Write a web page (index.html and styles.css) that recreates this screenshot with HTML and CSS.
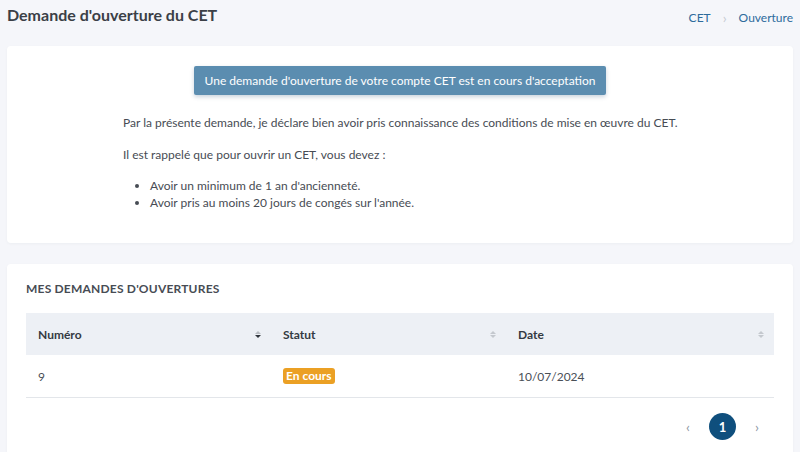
FILE: index.html
```html
<!DOCTYPE html>
<html lang="fr">
<head>
<meta charset="utf-8">
<title>Demande d'ouverture du CET</title>
<link rel="stylesheet" href="styles.css">
</head>
<body>
<div class="page">
  <header class="page-head">
    <h1 class="page-title">Demande d'ouverture du CET</h1>
    <nav class="crumbs">
      <a class="crumb">CET</a>
      <span class="crumb-sep">›</span>
      <a class="crumb">Ouverture</a>
    </nav>
  </header>

  <section class="card info-card">
    <div class="notice">Une demande d'ouverture de votre compte CET est en cours d'acceptation</div>
    <div class="info-text">
      <p>Par la présente demande, je déclare bien avoir pris connaissance des conditions de mise en œuvre du CET.</p>
      <p>Il est rappelé que pour ouvrir un CET, vous devez :</p>
      <ul>
        <li>Avoir un minimum de 1 an d'ancienneté.</li>
        <li>Avoir pris au moins 20 jours de congés sur l'année.</li>
      </ul>
    </div>
  </section>

  <section class="card list-card">
    <h2 class="card-title">MES DEMANDES D'OUVERTURES</h2>
    <div class="table">
      <div class="thead">
        <div class="th">Numéro<span class="sort active"><i class="up"></i><i class="down"></i></span></div>
        <div class="th">Statut<span class="sort"><i class="up"></i><i class="down"></i></span></div>
        <div class="th">Date<span class="sort"><i class="up"></i><i class="down"></i></span></div>
      </div>
      <div class="tr">
        <div class="td">9</div>
        <div class="td"><span class="badge">En cours</span></div>
        <div class="td">10/07/2024</div>
      </div>
    </div>
    <div class="pager">
      <span class="pg-arrow">‹</span>
      <span class="pg-num">1</span>
      <span class="pg-arrow">›</span>
    </div>
  </section>
</div>
</body>
</html>
```

FILE: styles.css
```css
* { box-sizing: border-box; }
html, body { margin: 0; padding: 0; }
body {
  background: #f5f6fa;
  font-family: "Lato", "Noto Sans", sans-serif;
  color: #4a4f57;
  font-size: 12px;
  overflow: hidden;
}
.page {
  padding: 0 7px;
  width: 800px;
}
.page-head {
  height: 46px;
  display: flex;
  justify-content: space-between;
  align-items: flex-start;
  padding-top: 5px;
}
.page-title {
  margin: 0;
  font-size: 16px;
  font-weight: 700;
  color: #3b3f47;
  line-height: 20px;
}
.crumbs {
  display: flex;
  align-items: center;
  gap: 12px;
  padding-top: 4px;
  font-size: 12px;
  color: #2d6b9c;
}
.crumb { color: #2d6b9c; }
.crumb-sep { color: #c6cbd2; font-size: 14px; }

.card {
  background: #fff;
  border-radius: 4px;
  box-shadow: 0 1px 3px rgba(30, 40, 60, 0.04);
}
.info-card {
  height: 197px;
  padding-top: 20px;
  display: flex;
  flex-direction: column;
  align-items: center;
}
.notice {
  width: 412px;
  height: 29px;
  line-height: 29px;
  text-align: center;
  background: #5b8db0;
  color: #fff;
  border-radius: 2px;
  box-shadow: 0 2px 4px rgba(40, 80, 120, 0.25);
  font-size: 12px;
  white-space: nowrap;
}
.info-text {
  align-self: flex-start;
  margin-left: 116px;
  margin-top: 19px;
  color: #474c54;
  font-size: 12px;
}
.info-text p {
  margin: 0 0 15px 0;
  line-height: 17px;
}
.info-text p + p { margin-bottom: 14px; }
.info-text ul {
  margin: 0;
  padding-left: 27px;
}
.info-text li { line-height: 17px; }

.list-card {
  margin-top: 21px;
  padding: 17px 19px 0 19px;
  height: 200px;
}
.card-title {
  margin: 0 0 16px 0;
  font-size: 12px;
  font-weight: 700;
  letter-spacing: 0.2px;
  color: #474c54;
  line-height: 16px;
}
.table { width: 748px; }
.thead, .tr {
  display: grid;
  grid-template-columns: 245px 235px 268px;
}
.thead {
  background: #edf0f5;
  height: 42px;
  align-items: center;
}
.th {
  padding: 0 10px 0 12px;
  font-weight: 700;
  color: #343a42;
  display: flex;
  justify-content: space-between;
  align-items: center;
}
.sort {
  display: flex;
  flex-direction: column;
  gap: 1px;
}
.sort i {
  display: block;
  width: 0; height: 0;
  border-left: 3.5px solid transparent;
  border-right: 3.5px solid transparent;
}
.sort .up { border-bottom: 3.5px solid #c4c8ce; }
.sort .down { border-top: 3.5px solid #c4c8ce; }
.sort.active .up { border-bottom-color: #b8bcc2; }
.sort.active .down { border-top-color: #2f343b; }
.tr {
  height: 43px;
  align-items: center;
  border-bottom: 1px solid #e3e6ea;
}
.td {
  padding: 0 12px;
  color: #4a4f57;
}
.badge {
  display: inline-block;
  background: #eba024;
  color: #fff;
  font-weight: 700;
  font-size: 12px;
  padding: 0 3px;
  height: 16px;
  line-height: 16px;
  border-radius: 3px;
}
.pager {
  display: flex;
  justify-content: flex-end;
  align-items: center;
  gap: 19px;
  margin-top: 15px;
  padding-right: 15px;
}
.pg-arrow {
  color: #8c96a3;
  font-size: 14px;
}
.pg-num {
  width: 27px;
  height: 27px;
  border-radius: 50%;
  background: #0f4f7d;
  color: #fff;
  font-weight: 700;
  display: flex;
  align-items: center;
  justify-content: center;
  font-size: 13px;
}
```
